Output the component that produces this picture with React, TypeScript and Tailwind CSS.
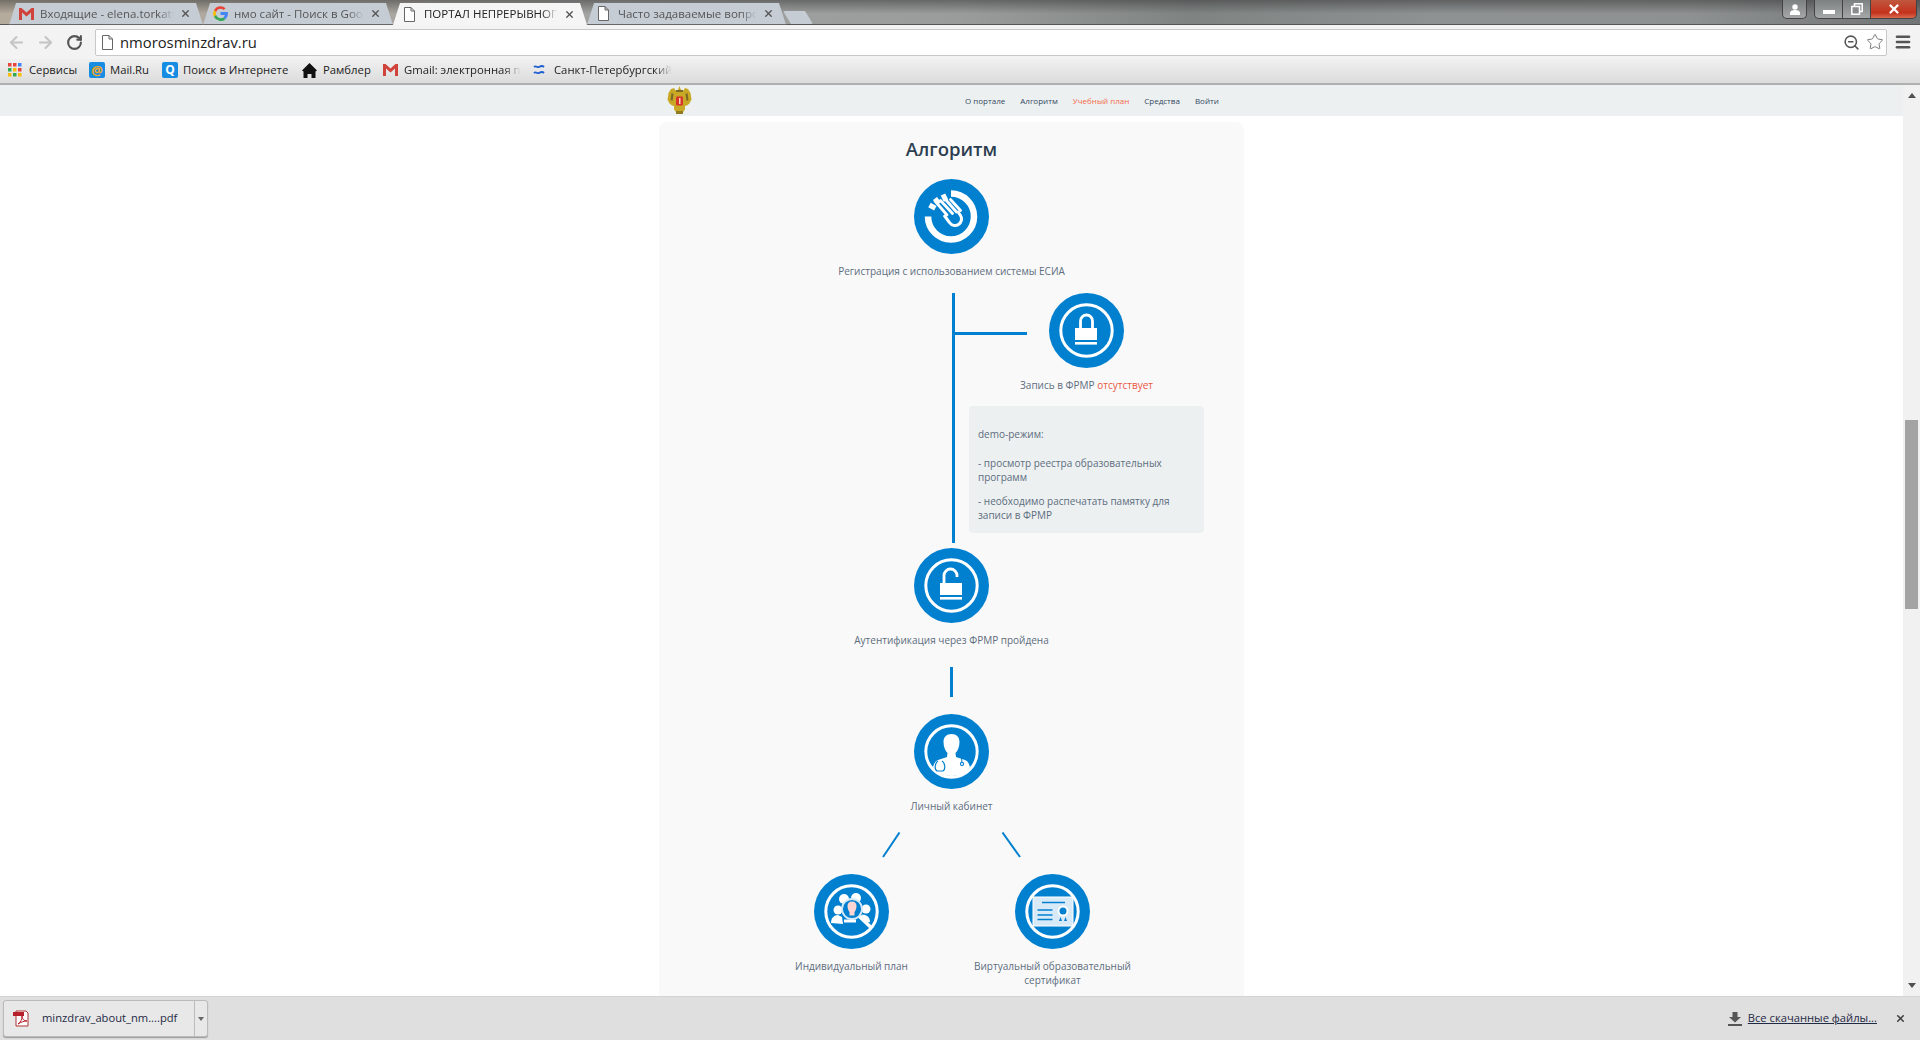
import React from 'react';
import { ArrowLeft, ArrowRight, RotateCw, Star, ZoomOut, Menu, X } from 'lucide-react';

const BLUE = '#0280d0';

const Ring = () => <circle cx="37.5" cy="37.5" r="25.7" fill="none" stroke="#fff" strokeWidth="3" />;

const TouchIcon = () => (
  <>
    <path d="M37 14.5a23 23 0 1 1-23 23" fill="none" stroke="#fff" strokeWidth="6.5" />
    <path d="M29 15.5l3 6.2M21 19.5l4 5.3M15.5 26l5.8 3.2" stroke="#fff" strokeWidth="5" fill="none" />
    <path d="M21 22l12 14M26.500 21.500l12 13M31.500 20.500l11 12.500M36.500 20.500l10 11" stroke="#fff" strokeWidth="2.800" fill="none" strokeLinecap="round" />
    <path d="M30 36l5.500 7.500c2 3 6 4 9 2s4-6 2-9l-3-4.500" fill="none" stroke="#fff" strokeWidth="3" />
  </>
);

const LockIcon = () => (
  <>
    <Ring />
    <path d="M31.5 35v-7a6 6 0 0 1 12 0v7" fill="none" stroke="#fff" strokeWidth="2.800" />
    <rect x="26" y="35" width="22" height="12" fill="#fff" />
    <rect x="26" y="49" width="22" height="2.600" fill="#fff" />
  </>
);

const OpenLockIcon = () => (
  <>
    <Ring />
    <path d="M30 36v-8.500a6.500 6.500 0 0 1 13 0v1.500" fill="none" stroke="#fff" strokeWidth="2.800" />
    <rect x="26" y="35" width="22" height="12" fill="#fff" />
    <rect x="26" y="49" width="22" height="2.600" fill="#fff" />
  </>
);

const DoctorIcon = () => (
  <>
    <Ring />
    <path d="M37.500 20c5 0 8 3 8 8 0 5-2 9-4 11l.5 4 9 3c3 1 4 4 5 7-4 6-10 9-18.500 9s-14.500-3-18.500-9c1-3 2-6 5-7l9-3 .5-4c-2-2-4-6-4-11 0-5 3-8 8-8z" fill="#fff" />
    <path d="M24 47c-3 2-4 8-1 10h6c3-2 2-8-1-10" fill="none" stroke={BLUE} strokeWidth="1.200" />
    <circle cx="48" cy="50" r="1.600" fill="none" stroke={BLUE} strokeWidth="1.100" />
    <path d="M47.500 44l.5 4.500" stroke={BLUE} strokeWidth="1" />
  </>
);

const PlanIcon = () => (
  <>
    <Ring />
    <circle cx="24" cy="36" r="4.500" fill="#fff" />
    <path d="M17 49c0-5 3-8 7-8l4 2 1 7z" fill="#fff" />
    <circle cx="30" cy="25" r="5" fill="#fff" />
    <circle cx="42" cy="24" r="5" fill="#fff" />
    <circle cx="52" cy="35" r="4.500" fill="#fff" />
    <path d="M47 41c4-1 9 1 9 7l-5 1z" fill="#fff" />
    <circle cx="38" cy="35" r="10" fill={BLUE} stroke="#d6e9f7" strokeWidth="1.800" />
    <path d="M38 27.500c3 0 4.500 2 4.500 4.500s-1 5-2 6v3.500h-5v-3.500c-1-1-2-3.500-2-6s1.500-4.500 4.500-4.500z" fill="#fcd5d2" />
    <path d="M30 47h12" stroke="#fff" strokeWidth="3" />
    <path d="M45.500 42.500l11 10.500" stroke="#fff" strokeWidth="3.600" />
  </>
);

const CertIcon = () => (
  <>
    <Ring />
    <rect x="18" y="23" width="40" height="29" fill="#d8eaf8" stroke="#fff" strokeWidth="1" />
    <path d="M27 28.500h23M22.500 36h15M22.500 41h15M22.500 45.500h15" stroke={BLUE} strokeWidth="1.700" />
    <circle cx="48" cy="37" r="5.500" fill="#fff" />
    <circle cx="48" cy="37" r="3.500" fill={BLUE} />
    <path d="M45.500 43l-1.500 4h3zM50.500 43l-1.500 4h3z" fill={BLUE} />
  </>
);

const Emblem = () => (
  <svg width="25" height="29" viewBox="0 0 25 29">
    <path d="M12.500 0l1.500 4 2.500.5 1.500-2.500 3 1 2.500 4 1 6.500-2 4-2.500 2-2 .5v3.500l-2 2.500h-7l-2-2.500v-3.500l-2-.5-2.500-2-2-4 1-6.500 2.500-4 3-1 1.500 2.500 2.500-.5z" fill="#c9a826" />
    <path d="M4.500 7l2 1-1 7-2-1zM20.500 7l-2 1 1 7 2-1zM9 4h7v2H9z" fill="#7a6a25" />
    <rect x="9" y="10.500" width="7" height="9" rx="1" fill="#d8352a" />
    <path d="M12 12h1.500v6H12z" fill="#f2d9b0" />
    <rect x="9" y="25" width="7" height="3" fill="#8f7a20" />
  </svg>
);

const Node = ({ icon, children }: { icon: React.ReactNode; children: React.ReactNode }) => (
  <div className="flex flex-col items-center">
    <svg width="75" height="75" viewBox="0 0 75 75" className="shrink-0">
      <circle cx="37.5" cy="37.5" r="37.5" fill={BLUE} />
      {icon}
    </svg>
    <p className="mt-[10px] text-center text-[10px] leading-[14px] text-[#5d6d7e]">{children}</p>
  </div>
);

const GmailIcon = () => (
  <svg width="15" height="12" viewBox="0 0 15 12">
    <path d="M0 0h2.500L7.500 4.500 12.500 0H15v12h-3V4.500L7.500 8.500 3 4.500V12H0z" fill="#d0433a" />
  </svg>
);

const GoogleIcon = () => (
  <svg width="15" height="15" viewBox="0 0 16 16">
    <path d="M8 3a5 5 0 0 1 3.400 1.300l2-2A8 8 0 0 0 1 4.500l2.400 1.800A5 5 0 0 1 8 3z" fill="#ea4335" />
    <path d="M3 8c0-.6.100-1.200.400-1.700L1 4.500a8 8 0 0 0 0 7l2.400-1.800C3.100 9.200 3 8.600 3 8z" fill="#fbbc05" />
    <path d="M8 13a5 5 0 0 1-4.600-3.300L1 11.500A8 8 0 0 0 13.400 14l-2.300-1.800c-.8.500-1.900.8-3.100.8z" fill="#34a853" />
    <path d="M15.800 6.500H8v3.200h4.500a3.800 3.800 0 0 1-1.400 2.500l2.300 1.800C15 12.500 16.400 9.800 15.800 6.500z" fill="#4285f4" />
  </svg>
);

const PageIcon = () => (
  <svg width="13" height="15" viewBox="0 0 13 15">
    <path d="M1.500.5h6.500l3.500 3.500v10.500h-10z M8 .5v3.500h3.500" fill="#fff" stroke="#666" strokeWidth="1" />
  </svg>
);

const tabs = [
  { title: 'Входящие - elena.torkatyu', icon: <GmailIcon />, w: 'w-[194px]' },
  { title: 'нмо сайт - Поиск в Goog', icon: <GoogleIcon />, w: 'w-[190px]' },
  { title: 'ПОРТАЛ НЕПРЕРЫВНОГО', icon: <PageIcon />, w: 'w-[194px]', active: true },
  { title: 'Часто задаваемые вопро', icon: <PageIcon />, w: 'w-[199px]' },
];

const TabStrip = () => (
  <div className="flex h-[25px] shrink-0 items-end bg-[linear-gradient(rgba(50,50,50,.5),rgba(50,50,50,0)_55%),linear-gradient(90deg,#b5ab9c_0%,#a3a4a2_30%,#999c9b_50%,#7f8483_62%,#8e9292_75%,#8e9191_88%,#707475_100%)] pl-[9px] shadow-[inset_0_-1px_0_#555]">
    {tabs.map((t) => (
      <div
        key={t.title}
        className={`flex h-[22px] items-center gap-[6px] pl-[10px] pr-[12px] text-[11.500px] [clip-path:polygon(0_100%,7px_0,calc(100%-7px)_0,100%_100%)] ${t.w} ${
          t.active ? 'bg-[#f5f5f5] text-[#222]' : 'border-b border-[#666] bg-[#c6ccd4] text-[#555]'
        }`}
      >
        <span className="w-[15px] shrink-0">{t.icon}</span>
        <span className="min-w-0 flex-1 whitespace-nowrap [mask-image:linear-gradient(90deg,#000_88%,transparent)]">{t.title}</span>
        <X size={11} strokeWidth={3} className="shrink-0 text-[#555]" />
      </div>
    ))}
    <div className="ml-[-3px] mb-[1px] h-[13px] w-[30px] rounded-[2px] bg-[#c6ccd4] [clip-path:polygon(0_0,calc(100%-8px)_0,100%_100%,8px_100%)]" />
    <div className="ml-auto flex h-[19px] self-start">
      <div className="mr-[7px] flex w-[25px] items-center justify-center rounded-b-[5px] border border-t-0 border-[#444] bg-[linear-gradient(#7d8080,#a5a8a8)]">
        <svg width="12" height="11" viewBox="0 0 12 11"><circle cx="6" cy="3" r="2.700" fill="#fff" /><path d="M1 11V9c0-2 2-3 5-3s5 1 5 3v2z" fill="#fff" /></svg>
      </div>
      <div className="flex w-[29px] items-center justify-center rounded-bl-[5px] border border-t-0 border-[#444] bg-[linear-gradient(#7d8080,#a5a8a8)]">
        <div className="mt-[5px] h-[4px] w-[12px] bg-white" />
      </div>
      <div className="flex w-[27px] items-center justify-center border-b border-[#444] bg-[linear-gradient(#7d8080,#a5a8a8)]">
        <svg width="12" height="12" viewBox="0 0 12 12" fill="none" stroke="#fff" strokeWidth="1.500"><rect x="3.500" y=".8" width="7.700" height="7.700" /><rect x=".8" y="3.500" width="7.700" height="7.700" fill="#8a8d8d" /></svg>
      </div>
      <div className="mr-[3px] flex w-[47px] items-center justify-center rounded-br-[5px] border border-t-0 border-[#444] bg-[linear-gradient(#c0573f,#c4321c_70%,#d86a4f)]">
        <X size={14} strokeWidth={4} className="text-white" />
      </div>
    </div>
  </div>
);

const AddressBar = () => (
  <div className="flex h-[34px] shrink-0 items-center bg-[#f3f3f3] pl-[7px] pr-[8px]">
    <ArrowLeft size={19} strokeWidth={2.500} className="text-[#c4c4c4]" />
    <ArrowRight size={19} strokeWidth={2.500} className="ml-[10px] text-[#c4c4c4]" />
    <RotateCw size={17} strokeWidth={3} className="ml-[11px] text-[#555]" />
    <div className="ml-[12px] flex h-[27px] flex-1 items-center rounded-[2px] border border-[#c8c8c8] bg-white pl-[5px] pr-[2px]">
      <PageIcon />
      <span className="ml-[6px] text-[14.800px] text-[#222]">nmorosminzdrav.ru</span>
      <ZoomOut size={17} strokeWidth={2.200} className="ml-auto text-[#555]" />
      <Star size={18} strokeWidth={1.300} className="ml-[6px] text-[#777]" />
    </div>
    <Menu size={18} strokeWidth={3.500} className="ml-[7px] text-[#555]" />
  </div>
);

const AppsIcon = () => (
  <svg width="14" height="14" viewBox="0 0 14 14">
    {[0, 5, 10].map((y, i) =>
      [0, 5, 10].map((x, j) => (
        <rect key={x + '-' + y} x={x} y={y} width="3.500" height="3.500" fill={[['#e8453c', '#e8453c', '#4285f4'], ['#34a853', '#fbbc05', '#e8453c'], ['#fbbc05', '#34a853', '#fbbc05']][i][j]} />
      )),
    )}
  </svg>
);

const bookmarks = [
  { label: 'Сервисы', icon: <AppsIcon />, w: 'w-[81px]' },
  {
    label: 'Mail.Ru',
    icon: (
      <span className="flex h-[16px] w-[16px] items-center justify-center rounded-[2px] bg-[#168de2] text-[13px] font-bold leading-none text-[#f9a825]">@</span>
    ),
    w: 'w-[73px]',
  },
  {
    label: 'Поиск в Интернете',
    icon: (
      <span className="flex h-[16px] w-[16px] items-center justify-center rounded-[2px] bg-[#168de2] text-[12px] font-bold leading-none text-white">Q</span>
    ),
    w: 'w-[140px]',
  },
  {
    label: 'Рамблер',
    icon: (
      <svg width="15" height="15" viewBox="0 0 15 15"><path d="M7.500 0L15 7.500l-1.500 1V15h-4v-4h-4v4h-4V8.500L0 7.500z" fill="#111" /></svg>
    ),
    w: 'w-[81px]',
  },
  {
    label: 'Gmail: электронная п',
    icon: <GmailIcon />,
    w: 'w-[150px]',
    fade: true,
  },
  {
    label: 'Санкт-Петербургский',
    icon: (
      <svg width="13" height="12" viewBox="0 0 13 12" fill="none" stroke="#1d5fd0" strokeWidth="1.800"><path d="M1 3c2-2 3 1 5 0s3-2 5 0M1 9c2-2 3 1 5 0s3-2 5 0" /></svg>
    ),
    w: 'w-[140px]',
    fade: true,
  },
];

const BookmarksBar = () => (
  <div className="flex h-[26px] shrink-0 items-center border-b-2 border-[#b0b0b0] bg-[linear-gradient(#f0f0f0,#dcdcdc)] pb-[2px] pl-[8px] text-[11.300px] text-[#222]">
    {bookmarks.map((b) => (
      <div key={b.label} className={`flex items-center whitespace-nowrap ${b.w}`}>
        <span className="w-[21px] shrink-0">{b.icon}</span>
        <span className={b.fade ? '[mask-image:linear-gradient(90deg,#000_85%,transparent)]' : ''}>{b.label}</span>
      </div>
    ))}
  </div>
);

const navLinks = ['О портале', 'Алгоритм', 'Учебный план', 'Средства', 'Войти'];

const Page = () => (
  <div className="min-w-0 flex-1 overflow-hidden bg-white">
    <div className="h-[31px] bg-[#ecf0f1]">
      <div className="mx-auto flex h-full w-[585px] items-center pl-[8px]">
        <Emblem />
        <div className="ml-[273px] flex gap-[15px] whitespace-nowrap text-[8px] font-medium">
          {navLinks.map((l) => (
            <span key={l} className={l === 'Учебный план' ? 'text-[#f4694b]' : 'text-[#34495e]'}>{l}</span>
          ))}
        </div>
      </div>
    </div>
    <div className="mx-auto mt-[6px] h-[1000px] w-[585px] rounded-[8px] bg-[#f9f9f9] pt-[12px]">
      <h1 className="text-center text-[18.500px] font-semibold leading-[30px] text-[#2c3e50]">Алгоритм</h1>
      <div className="mt-[15px]">
        <Node icon={<TouchIcon />}>Регистрация с использованием системы ЕСИА</Node>
      </div>
      <div className="relative mt-[15px] flex h-[250px] pl-[293px]">
        <div className="h-full w-[3px] bg-[#0280d0]" />
        <div className="absolute left-[296px] top-[39px] h-[2.500px] w-[72px] bg-[#0280d0]" />
        <div className="ml-[14px] flex w-[235px] flex-col items-center">
          <Node icon={<LockIcon />}>
            Запись в ФРМР <span className="text-[#e9573f]">отсутствует</span>
          </Node>
          <div className="mt-[14px] h-[127px] w-full rounded-[4px] bg-[#ecf0f1] py-[21px] pl-[9px] pr-[8px] text-[10px] leading-[14px] text-[#5d6d7e]">
            <p>demo-режим:</p>
            <p className="mt-[15px]">- просмотр реестра образовательных программ</p>
            <p className="mt-[10px]">- необходимо распечатать памятку для записи в ФРМР</p>
          </div>
        </div>
      </div>
      <div className="mt-[5px]">
        <Node icon={<OpenLockIcon />}>Аутентификация через ФРМР пройдена</Node>
      </div>
      <div className="mx-auto mt-[20px] h-[30px] w-[2.500px] bg-[#0280d0]" />
      <div className="mt-[17px]">
        <Node icon={<DoctorIcon />}>Личный кабинет</Node>
      </div>
      <svg width="150" height="26" viewBox="0 0 150 26" className="mx-auto mt-[19px]">
        <path d="M22.500 .5L6 25M125.500 .5L143 25" stroke="#0280d0" strokeWidth="2" fill="none" />
      </svg>
      <div className="mt-[16px] flex pl-[92px]">
        <div className="w-[201px]">
          <Node icon={<PlanIcon />}>Индивидуальный план</Node>
        </div>
        <div className="w-[201px] px-[14px]">
          <Node icon={<CertIcon />}>Виртуальный образовательный сертификат</Node>
        </div>
      </div>
    </div>
  </div>
);

const Scrollbar = () => (
  <div className="flex w-[17px] shrink-0 flex-col items-center bg-[#f1f1f1]">
    <div className="mt-[8px] h-0 w-0 border-x-[4px] border-b-[5px] border-x-transparent border-b-[#505050]" />
    <div className="mt-[322px] h-[189px] w-[13px] bg-[#a3a3a3]" />
    <div className="mt-auto mb-[8px] h-0 w-0 border-x-[4px] border-t-[5px] border-x-transparent border-t-[#505050]" />
  </div>
);

const DownloadBar = () => (
  <div className="flex h-[44px] shrink-0 items-center border-t border-[#d3d3d3] bg-[#dfdfdf] pl-[3px] pr-[14px] text-[11.200px] text-[#1f2a44]">
    <div className="flex h-[37px] w-[205px] items-center rounded-[3px] border border-[#bbb] bg-[#e8e8e8] shadow-[0_1px_1px_#999]">
      <svg width="17" height="17" viewBox="0 0 17 17" className="ml-[9px]">
        <path d="M3 1h10l2 2v13H3z" fill="#fff" stroke="#a33" strokeWidth="1" />
        <rect x="0" y="2" width="11" height="4" fill="#b5202a" />
        <path d="M5 14c3-2 4-5 4-8 0 3 2 5 5 5-3 0-6 1-9 3z" fill="none" stroke="#b5202a" strokeWidth="1" />
      </svg>
      <span className="ml-[12px] whitespace-nowrap">minzdrav_about_nm....pdf</span>
      <div className="ml-auto flex h-full w-[13px] items-center justify-center border-l border-[#bbb]">
        <div className="h-0 w-0 border-x-[3px] border-t-[4px] border-x-transparent border-t-[#666]" />
      </div>
    </div>
    <svg width="14" height="14" viewBox="0 0 14 14" className="ml-auto">
      <path d="M4.500 0h5v5H13L7 10.500 1 5h3.500zM0 12h14v2H0z" fill="#555" />
    </svg>
    <span className="ml-[6px] underline">Все скачанные файлы...</span>
    <X size={11} strokeWidth={3.500} className="ml-[18px] text-[#444]" />
  </div>
);

export default function App() {
  return (
    <div className="flex h-screen w-full flex-col overflow-hidden font-['Open_Sans',sans-serif]">
      <TabStrip />
      <AddressBar />
      <BookmarksBar />
      <div className="flex min-h-0 flex-1">
        <Page />
        <Scrollbar />
      </div>
      <DownloadBar />
    </div>
  );
}
